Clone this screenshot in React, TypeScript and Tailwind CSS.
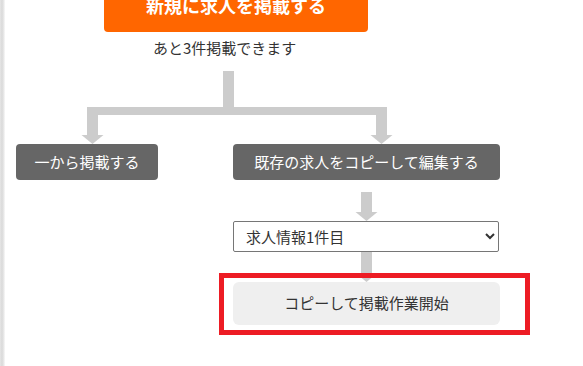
import React from "react";

const font = { fontFamily: '"Noto Sans CJK JP", "Noto Sans", sans-serif' };

export default function App() {
  return (
    <div
      className="relative w-[583px] h-[366px] overflow-hidden bg-[linear-gradient(to_right,#e9e9e9_0px,#dcdcdc_1px,#dedede_3px,#efefef_4px,#f6f6f6_5px,#ffffff_5px)] text-[#333]"
      style={font}
    >
      <div className="ml-[104px] w-[264px] -mt-[22px] h-[54px] rounded-[4px] bg-[#ff6600] flex items-center justify-center text-white font-bold text-[18px] leading-none">
        新規に求人を掲載する
      </div>
      <p className="ml-[153px] mt-[5px] text-[15px] leading-[22px] text-[#333]">あと3件掲載できます</p>
      <svg className="block mt-[12px]" width="583" height="73" viewBox="0 0 583 73">
        <g fill="#cccccc">
          <rect x="223" y="0" width="11" height="40" />
          <rect x="87" y="36" width="300" height="8" />
          <rect x="87" y="36" width="11" height="28" />
          <polygon points="81.5,64 103.5,64 92.5,73" />
          <rect x="376" y="36" width="11" height="28" />
          <polygon points="370.5,64 392.5,64 381.5,73" />
        </g>
      </svg>
      <div className="flex items-start">
        <div className="ml-[16px] w-[142px] h-[36px] rounded-[4px] bg-[#666666] text-white text-[15px] flex items-center justify-center">
          一から掲載する
        </div>
        <div className="ml-[75px] w-[267px] flex flex-col">
          <div className="h-[36px] rounded-[4px] bg-[#666666] text-white text-[15px] flex items-center justify-center">
            既存の求人をコピーして編集する
          </div>
          <svg className="block" width="267" height="41" viewBox="0 0 267 41">
            <g fill="#cccccc">
              <rect x="128" y="12" width="11" height="20" />
              <polygon points="122.5,32 144.5,32 133.5,41" />
            </g>
          </svg>
          <select
            className="w-[266px] h-[31px] border border-[#767676] rounded-[2px] bg-white pl-[8px] text-[15px] text-[#333] outline-none"
            style={font}
            defaultValue="1"
          >
            <option value="1">求人情報1件目</option>
          </select>
          <svg className="block" width="267" height="30" viewBox="0 0 267 30">
            <g fill="#cccccc">
              <rect x="128" y="0" width="11" height="21" />
              <polygon points="122.5,21 144.5,21 133.5,30" />
            </g>
          </svg>
          <div className="h-[43px] rounded-[6px] bg-[#efefef] text-[#333] text-[15px] flex items-center justify-center">
            コピーして掲載作業開始
          </div>
        </div>
      </div>
      <div className="pointer-events-none absolute left-[219px] top-[273px] w-[311px] h-[62px] border-[5px] border-[#ed1c24]" />
    </div>
  );
}
